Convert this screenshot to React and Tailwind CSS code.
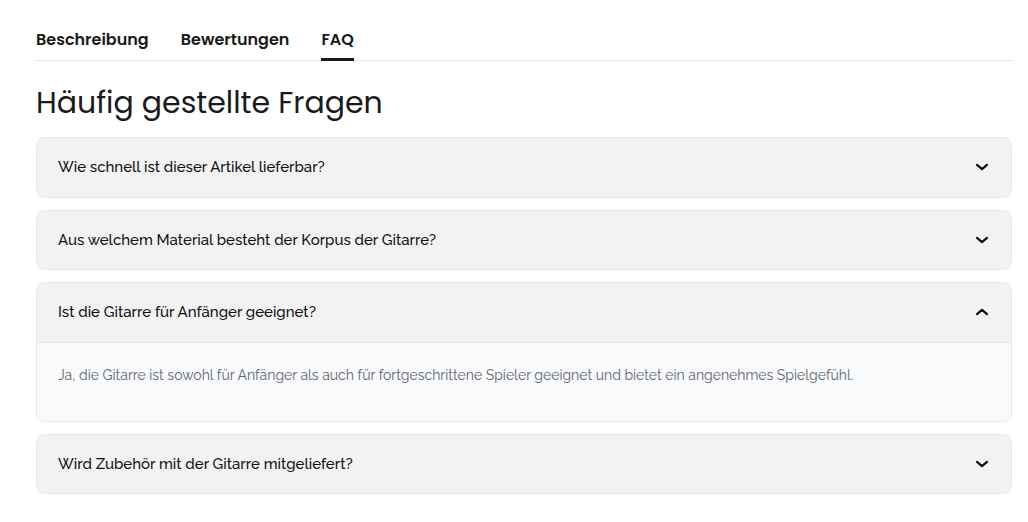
import { useState } from "react";

const faqs = [
  { q: "Wie schnell ist dieser Artikel lieferbar?", a: "Der Artikel ist auf Lager und wird innerhalb von 1-3 Werktagen geliefert." },
  { q: "Aus welchem Material besteht der Korpus der Gitarre?", a: "Der Korpus besteht aus massivem Mahagoni." },
  {
    q: "Ist die Gitarre für Anfänger geeignet?",
    a: "Ja, die Gitarre ist sowohl für Anfänger als auch für fortgeschrittene Spieler geeignet und bietet ein angenehmes Spielgefühl.",
  },
  { q: "Wird Zubehör mit der Gitarre mitgeliefert?", a: "Ein Gigbag und ein Gurt sind im Lieferumfang enthalten." },
];

function Chevron({ up }) {
  return (
    <svg
      width="20"
      height="20"
      viewBox="0 0 24 24"
      fill="none"
      stroke="#111"
      strokeWidth="2.75"
      strokeLinecap="round"
      strokeLinejoin="round"
      className={up ? "rotate-180" : ""}
    >
      <path d="m6 9.5 6 5 6-5" />
    </svg>
  );
}

export default function App() {
  const [open, setOpen] = useState(2);
  const tabs = ["Beschreibung", "Bewertungen", "FAQ"];

  return (
    <div className="bg-white min-h-screen pl-[36px] pr-[16px] pt-[28px] text-[#1a1a1a]">
      <div className="flex gap-8 border-b border-[#e5e5e5] font-['Poppins','Inter',sans-serif]">
        {tabs.map((t) => (
          <button
            key={t}
            className={
              "pb-[6px] text-[16px] font-semibold leading-[24px] border-b-[3px] -mb-px " +
              (t === "FAQ" ? "border-[#1a1a1a]" : "border-transparent")
            }
          >
            {t}
          </button>
        ))}
      </div>

      <h2 className="mt-[24px] mb-[16px] text-[30px] leading-[36px] font-normal font-['Poppins','Inter',sans-serif]">
        Häufig gestellte Fragen
      </h2>

      <div className="flex flex-col gap-[12px] font-['Raleway','Lato',sans-serif]">
        {faqs.map((f, i) => (
          <div key={i} className="rounded-lg border border-[#e6e6e6] overflow-hidden">
            <button
              onClick={() => setOpen(open === i ? -1 : i)}
              className="w-full h-[58.5px] flex items-center justify-between bg-[#f2f2f2] pl-[21px] pr-[19px] text-left"
            >
              <span className="text-[15px] font-medium text-[#111]">{f.q}</span>
              <Chevron up={open === i} />
            </button>
            {open === i && (
              <div className="border-t border-[#e6e6e6] bg-[#f9fafb] px-[21px] pt-[22px] pb-[36px] text-[14px] leading-[20px] font-normal text-[#5f6672]">
                {f.a}
              </div>
            )}
          </div>
        ))}
      </div>
    </div>
  );
}
